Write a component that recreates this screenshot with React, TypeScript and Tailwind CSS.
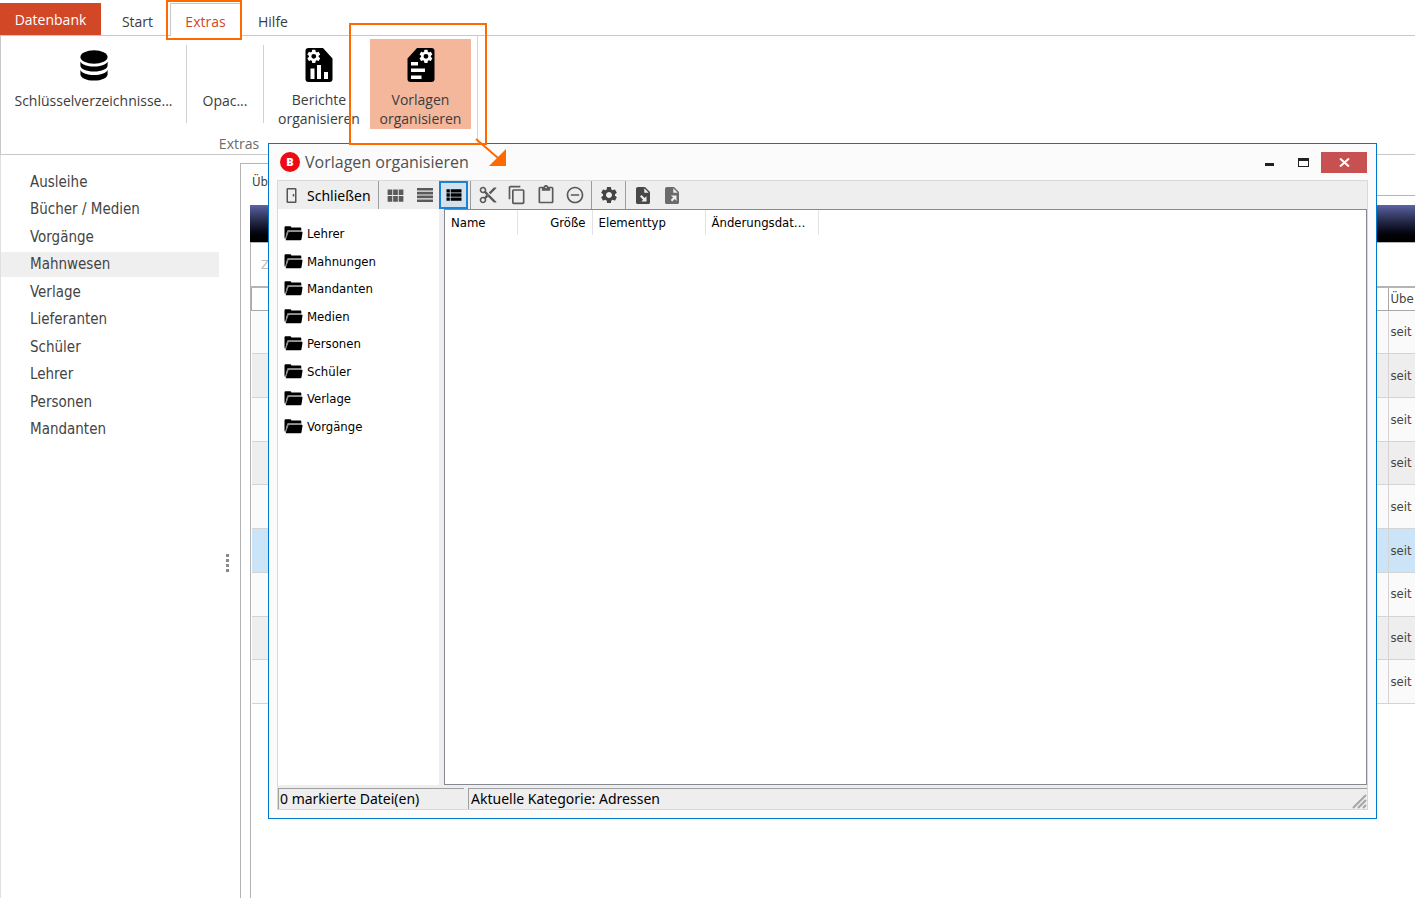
import type { ReactNode } from "react";
import clsx from "clsx";
import {
    MdContentCopy,
    MdContentCut,
    MdOutlineContentPaste,
    MdRemoveCircleOutline,
    MdSettings,
    MdViewList,
    MdViewModule,
} from "react-icons/md";

const areas = [
    "Ausleihe",
    "Bücher / Medien",
    "Vorgänge",
    "Mahnwesen",
    "Verlage",
    "Lieferanten",
    "Schüler",
    "Lehrer",
    "Personen",
    "Mandanten",
];

const folders = ["Lehrer", "Mahnungen", "Mandanten", "Medien", "Personen", "Schüler", "Verlage", "Vorgänge"];

const loans = Array.from({ length: 9 }, (_, i) => ({ id: i, since: "seit", selected: i === 5 }));

const GEAR =
    "M19.14 12.94c.04-.3.06-.61.06-.94s-.02-.64-.07-.94l2.03-1.58c.18-.14.23-.41.12-.61l-1.92-3.32c-.12-.22-.37-.29-.59-.22l-2.39.96c-.5-.38-1.03-.7-1.62-.94l-.36-2.54c-.04-.24-.24-.41-.48-.41h-3.84c-.24 0-.43.17-.47.41l-.36 2.54c-.59.24-1.13.57-1.62.94l-2.39-.96c-.22-.08-.47 0-.59.22L2.74 8.87c-.12.21-.08.47.12.61l2.03 1.58c-.05.3-.09.63-.09.94s.02.64.07.94l-2.03 1.58c-.18.14-.23.41-.12.61l1.92 3.32c.12.22.37.29.59.22l2.39-.96c.5.38 1.03.7 1.62.94l.36 2.54c.05.24.24.41.48.41h3.84c.24 0 .44-.17.47-.41l.36-2.54c.59-.24 1.13-.56 1.62-.94l2.39.96c.22.08.47 0 .59-.22l1.92-3.32c.12-.22.07-.47-.12-.61l-2.01-1.58zM12 15.6A3.6 3.6 0 1 1 12 8.4a3.6 3.6 0 0 1 0 7.2z";

function DatabaseIcon() {
    return (
        <svg width="28" height="31" viewBox="0 0 28 31" aria-hidden="true">
            <ellipse cx="14" cy="7" rx="13.6" ry="6.800" />
            <path d="M.4 11.500c1.600 3.400 7 5 13.600 5s12-1.600 13.600-5v4c0 3.500-6 6-13.600 6S.4 19 .4 15.500z" />
            <path d="M.4 20c1.600 3.400 7 5 13.600 5s12-1.600 13.600-5v4.200c0 3.700-6 6.400-13.600 6.400S.4 27.900.4 24.200z" />
        </svg>
    );
}

function ReportIcon() {
    return (
        <svg width="28" height="34" viewBox="0 0 28 34" aria-hidden="true">
            <path d="M3.500 0H18l9.500 10.500V31a3 3 0 0 1-3 3h-21a3 3 0 0 1-3-3V3a3 3 0 0 1 3-3z" />
            <path fill="#fff" d="M5.500 20.500h4V31h-4zM12 17h4v14h-4zM19 24h4v7h-4z" />
            <path fill="#fff" d={GEAR} transform="translate(.6 .2) scale(.68)" />
        </svg>
    );
}

function TemplateIcon() {
    return (
        <svg width="28" height="34" viewBox="0 0 28 34" aria-hidden="true">
            <path d="M24.500 0H10L.5 10.500V31a3 3 0 0 0 3 3h21a3 3 0 0 0 3-3V3a3 3 0 0 0-3-3z" />
            <path fill="#fff" d="M4 14h7v3.500H4zM4 20.500h14V24H4zM4 27.500h10.500V31H4z" />
            <path fill="#fff" d={GEAR} transform="translate(10.800 .2) scale(.68)" />
        </svg>
    );
}

function DoorIcon() {
    return (
        <svg width="11" height="15" viewBox="0 0 11 15" fill="none" stroke="#555" strokeWidth="1.5" aria-hidden="true">
            <rect x="1.250" y=".75" width="8.500" height="13.500" rx=".5" />
            <path d="M7.500 6v2.500" />
        </svg>
    );
}

function FolderIcon() {
    return (
        <svg width="19" height="15" viewBox="0 0 19 15" aria-hidden="true">
            <path d="M.5 1.500C.5.700 1 .3 1.700.3h4.500c.6 0 1 .4 1.200 1.200h8.800c.7 0 1.100.4 1.100 1.100v2H4.300c-.7 0-1 .4-1.200 1L1.200 13C.7 12.600.5 12.200.5 11.500z" />
            <path fill="#888" d="M3.800 4.300h13.500v1.300H4.600L2.200 13l-.9-.2L3.200 5z" />
            <path d="M4.600 5.800h13.200c.6 0 .8.300.7.900l-1 6.500c-.1.700-.5 1-1.200 1H1.600z" />
        </svg>
    );
}

function LinesIcon() {
    return (
        <svg width="16" height="14" viewBox="0 0 16 14" fill="#5a5a5a" aria-hidden="true">
            <path d="M0 0h16v2.600H0zM0 3.800h16v2.600H0zM0 7.600h16v2.600H0zM0 11.400h16V14H0z" />
        </svg>
    );
}

function FileArrowIcon({ out }: { out?: boolean }) {
    return (
        <svg width="14" height="17" viewBox="0 0 14 17" fill={out ? "#6b6b6b" : "#484848"} aria-hidden="true">
            <path d="M2 0h7l5 5v10.500c0 .8-.7 1.500-1.500 1.500h-11C.7 17 0 16.300 0 15.500V2C0 .9.900 0 2 0z" />
            <path fill="#eee" d="M8.300 1.300v4.400h4.400z" />
            {out ? (
                <path fill="#eee" d="M11.500 8.500V14l-1.900-1.900-2.400 2.400-1.500-1.500 2.400-2.400L6 8.500z" />
            ) : (
                <path fill="#eee" d="M10.500 14.500V9.200l-1.800 1.800L5.500 8 4 9.500l3.100 3.200-1.800 1.800z" />
            )}
        </svg>
    );
}

function ToolButton({ label, active, children }: { label: string; active?: boolean; children: ReactNode }) {
    return (
        <button
            type="button"
            aria-label={label}
            className={clsx(
                "flex h-7 w-[29px] items-center justify-center",
                active ? "border-2 border-[#1e82d2] bg-[#d3e1ee] text-black" : "text-[#5a5a5a]"
            )}
        >
            {children}
        </button>
    );
}

function Separator() {
    return <span className="mx-0.5 h-7 w-px bg-[#9a9da0]" />;
}

function Ribbon() {
    return (
        <header className="font-['Open_Sans','Noto_Sans',sans-serif] text-[14px] text-[#3c3c3c]">
            <nav className="flex h-9 items-end border-b border-[#c8c8c8] pt-[3px]">
                <button type="button" className="h-8 w-[101px] bg-[#d24726] text-white">
                    Datenbank
                </button>
                <button type="button" className="h-8 w-[69px] pt-1 pl-1">
                    Start
                </button>
                <button
                    type="button"
                    className="-mb-px h-[33px] w-[71px] border border-b-0 border-[#c8c8c8] bg-white pt-[3px] text-[#d24726]"
                >
                    Extras
                </button>
                <button type="button" className="h-8 w-[64px] pt-1">
                    Hilfe
                </button>
            </nav>
            <div className="flex h-[119px] border-b border-l border-[#c8c8c8]">
                <div className="flex w-[477px] flex-col border-r border-[#d5d5d5]">
                    <div className="flex pt-[3px]">
                        <button type="button" className="flex w-[185px] flex-col items-center gap-[9px] pt-[11px]">
                            <DatabaseIcon />
                            Schlüsselverzeichnisse...
                        </button>
                        <div className="mt-1.5 flex h-[78px] w-[78px] items-center justify-center border-x border-[#d0d0d0] pt-8">
                            <button type="button">Opac...</button>
                        </div>
                        <button type="button" className="ml-1 flex h-[90px] w-[102px] flex-col items-center gap-2 pt-[9px] leading-[19px]">
                            <ReportIcon />
                            <span>
                                Berichte
                                <br />
                                organisieren
                            </span>
                        </button>
                        <button
                            type="button"
                            className="flex h-[90px] w-[101px] flex-col items-center gap-2 bg-[#f4b79c] pt-[9px] leading-[19px]"
                        >
                            <TemplateIcon />
                            <span>
                                Vorlagen
                                <br />
                                organisieren
                            </span>
                        </button>
                    </div>
                    <div className="pt-1 text-center text-[#6b6b6b]">Extras</div>
                </div>
            </div>
        </header>
    );
}

function Sidebar() {
    return (
        <aside className="flex w-60 shrink-0 border-l border-[#e0e0e0] font-['DejaVu_Sans_Condensed','Noto_Sans',sans-serif] text-[15px] text-[#444]">
            <nav className="mt-[13px] grid h-[275px] w-[218px] auto-rows-fr">
                {areas.map((area) => (
                    <a
                        key={area}
                        href="#"
                        className={clsx("my-px flex items-center pl-[29px]", area === "Mahnwesen" && "bg-[#efefef]")}
                    >
                        {area}
                    </a>
                ))}
            </nav>
            <div className="mt-[399px] ml-[7px] flex h-[18px] flex-col justify-between">
                {[0, 1, 2, 3].map((dot) => (
                    <span key={dot} className="size-[3px] bg-[#8a8a8a]" />
                ))}
            </div>
        </aside>
    );
}

function Workspace() {
    return (
        <main className="mt-2 flex min-w-0 flex-1 flex-col border-l border-[#b4b4b4] font-['DejaVu_Sans_Condensed','Noto_Sans',sans-serif] text-[13px] text-[#444]">
            <div className="flex h-[33px]">
                <div className="w-40 border-t border-[#b4b4b4] pt-2 pl-[11px]">Üb</div>
                <div className="flex-1 border-b border-[#b4b4b4]" />
            </div>
            <div className="mt-[9px] ml-[9px] flex flex-1 flex-col">
                <div className="h-[37px] bg-linear-to-b from-[#5c64a4] to-black" />
                <div className="flex flex-1 flex-col border-t border-l border-[#b4b4b4]">
                    <div className="h-[43px] pt-3 pl-2.5 text-[#bbb]">Z</div>
                    <table className="h-[418px] w-full table-fixed border-collapse border-t-2 border-[#b4b4b4]">
                        <thead>
                            <tr className="h-[23px] border-b border-[#a8a8a8]">
                                <th className="border-l border-[#a8a8a8]" />
                                <th className="w-[27px] border-l border-[#a8a8a8] pl-0.5 text-left font-normal">Übe</th>
                            </tr>
                        </thead>
                        <tbody>
                            {loans.map((loan) => (
                                <tr
                                    key={loan.id}
                                    className={clsx(
                                        "border-b border-[#d4d4d4]",
                                        loan.selected ? "bg-[#cce4f7]" : loan.id % 2 ? "bg-[#eee]" : "bg-[#fafafa]"
                                    )}
                                >
                                    <td />
                                    <td className="border-l border-[#d4d4d4] pl-0.5">{loan.since}</td>
                                </tr>
                            ))}
                        </tbody>
                    </table>
                </div>
            </div>
        </main>
    );
}

function TemplateWindow() {
    return (
        <section className="absolute top-[143px] right-[38px] left-[268px] border border-[#0078d0] bg-[#fbfbfb] px-2 pb-2 text-black">
            <div className="flex h-9 items-center pr-px font-['Open_Sans','Noto_Sans',sans-serif] text-[#505050]">
                <span className="ml-[3px] flex size-5 items-center justify-center rounded-full bg-[#ef0a12] text-[11px] font-extrabold text-white">
                    B
                </span>
                <h1 className="ml-[5px] flex-1 text-[16px]">Vorlagen organisieren</h1>
                <button type="button" aria-label="Minimieren" className="flex h-[21px] w-[34px] items-center justify-center pt-1">
                    <span className="h-[3px] w-[9px] bg-[#222]" />
                </button>
                <button type="button" aria-label="Maximieren" className="flex h-[21px] w-[34px] items-center justify-center">
                    <span className="h-[9px] w-[11px] border border-t-[3px] border-[#222]" />
                </button>
                <button
                    type="button"
                    aria-label="Fenster schließen"
                    className="ml-px flex h-[21px] w-[46px] items-center justify-center bg-[#c75050]"
                >
                    <svg width="11" height="9" viewBox="0 0 11 9" stroke="#fff" strokeWidth="2" aria-hidden="true">
                        <path d="M1 .5l9 8M10 .5l-9 8" />
                    </svg>
                </button>
            </div>

            <div className="border border-[#d9d9d9] bg-[#eee] font-['DejaVu_Sans_Condensed','Noto_Sans',sans-serif] text-[13px]">
                <div className="flex h-7 items-center">
                    <button type="button" className="flex w-[98px] items-center gap-2.5 pl-2 font-['Noto_Sans',sans-serif] text-[14px]">
                        <DoorIcon />
                        Schließen
                    </button>
                    <Separator />
                    <ToolButton label="Symbole">
                        <MdViewModule size={21} />
                    </ToolButton>
                    <ToolButton label="Liste">
                        <LinesIcon />
                    </ToolButton>
                    <ToolButton label="Details" active>
                        <MdViewList size={20} />
                    </ToolButton>
                    <Separator />
                    <ToolButton label="Ausschneiden">
                        <MdContentCut size={20} />
                    </ToolButton>
                    <ToolButton label="Kopieren">
                        <MdContentCopy size={20} />
                    </ToolButton>
                    <ToolButton label="Einfügen">
                        <MdOutlineContentPaste size={20} />
                    </ToolButton>
                    <ToolButton label="Löschen">
                        <MdRemoveCircleOutline size={20} />
                    </ToolButton>
                    <Separator />
                    <ToolButton label="Einstellungen">
                        <MdSettings size={20} className="text-[#444]" />
                    </ToolButton>
                    <Separator />
                    <ToolButton label="Importieren">
                        <FileArrowIcon />
                    </ToolButton>
                    <ToolButton label="Exportieren">
                        <FileArrowIcon out />
                    </ToolButton>
                </div>

                <div className="flex h-[576px]">
                    <ul className="mr-[5px] grid w-[161px] shrink-0 auto-rows-[minmax(0,1fr)] content-start bg-white pt-[11px] pb-[345px]">
                        {folders.map((folder) => (
                            <li key={folder} className="flex">
                                <a href="#" className="flex items-center gap-1 pl-1.5">
                                    <FolderIcon />
                                    {folder}
                                </a>
                            </li>
                        ))}
                    </ul>
                    <div className="flex-1 border border-[#858a92] bg-white">
                        <table className="table-fixed border-collapse">
                            <thead>
                                <tr className="h-[25px] text-left *:border-r *:border-[#e2e2e2] *:px-1.5 *:font-normal">
                                    <th className="w-[72px]">Name</th>
                                    <th className="w-[75px] text-right">Größe</th>
                                    <th className="w-[113px]">Elementtyp</th>
                                    <th className="w-[113px]">Änderungsdat…</th>
                                </tr>
                            </thead>
                        </table>
                    </div>
                </div>

                <footer className="flex gap-1 pt-[3px] font-['Noto_Sans',sans-serif] text-[14px] leading-5">
                    <div className="w-[186px] border-t border-l border-[#a0a0a0] pl-px">0 markierte Datei(en)</div>
                    <div className="flex flex-1 items-end justify-between border-t border-l border-[#a0a0a0] pl-0.5">
                        Aktuelle Kategorie: Adressen
                        <svg width="15" height="15" viewBox="0 0 15 15" stroke="#a6a6a6" strokeWidth="2" aria-hidden="true">
                            <path d="M1 14L14 1M6 14l8-8M11 14l3-3" />
                        </svg>
                    </div>
                </footer>
            </div>
        </section>
    );
}

export default function App() {
    return (
        <div className="relative flex min-h-screen flex-col overflow-hidden bg-white">
            <Ribbon />
            <div className="flex flex-1">
                <Sidebar />
                <Workspace />
            </div>
            <TemplateWindow />

            {/* Click path markers */}
            <div className="pointer-events-none absolute top-0 left-[166px] h-10 w-[76px] border-2 border-[#ff6a00]" />
            <div className="pointer-events-none absolute top-[23px] left-[349px] h-[122px] w-[138px] border-2 border-[#ff6a00]" />
            <svg
                className="pointer-events-none absolute top-[137px] left-[474px]"
                width="34"
                height="32"
                viewBox="0 0 34 32"
                aria-hidden="true"
            >
                <path d="M2 2l22 19" stroke="#ff6a00" strokeWidth="2" />
                <path d="M32 12v17H15z" fill="#ff6a00" />
            </svg>
        </div>
    );
}
